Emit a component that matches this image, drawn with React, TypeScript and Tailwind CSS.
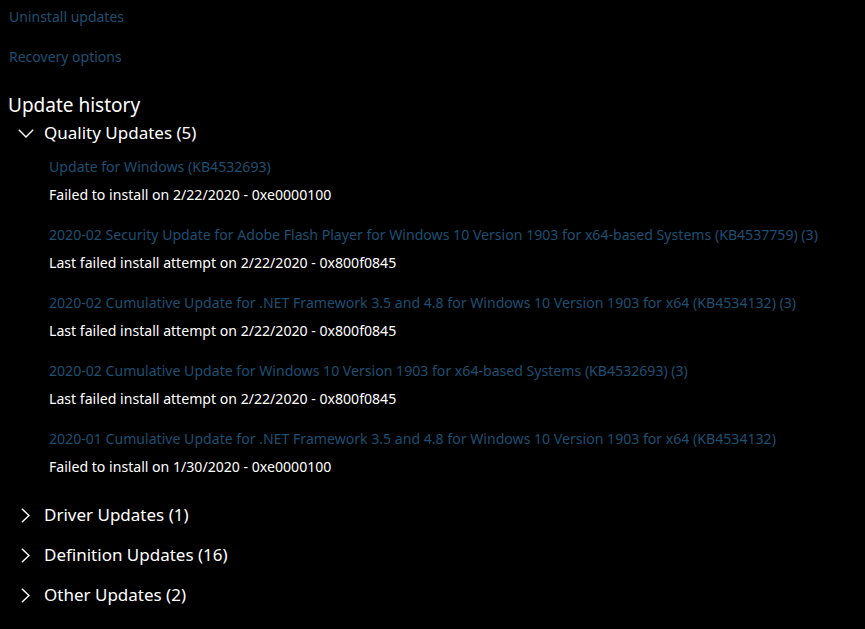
import React from "react";

const LINK = "text-[#1d4f73]";

const items = [
  ["Update for Windows (KB4532693)", "Failed to install on 2/22/2020 - 0xe0000100"],
  ["2020-02 Security Update for Adobe Flash Player for Windows 10 Version 1903 for x64-based Systems (KB4537759) (3)", "Last failed install attempt on 2/22/2020 - 0x800f0845"],
  ["2020-02 Cumulative Update for .NET Framework 3.5 and 4.8 for Windows 10 Version 1903 for x64 (KB4534132) (3)", "Last failed install attempt on 2/22/2020 - 0x800f0845"],
  ["2020-02 Cumulative Update for Windows 10 Version 1903 for x64-based Systems (KB4532693) (3)", "Last failed install attempt on 2/22/2020 - 0x800f0845"],
  ["2020-01 Cumulative Update for .NET Framework 3.5 and 4.8 for Windows 10 Version 1903 for x64 (KB4534132)", "Failed to install on 1/30/2020 - 0xe0000100"],
];

function ChevronDown() {
  return (
    <svg width="16" height="9" viewBox="0 0 16 9" className="shrink-0">
      <path d="M0.8 0.8 L8 8 L15.2 0.8" stroke="white" strokeWidth="1.4" fill="none" />
    </svg>
  );
}
function ChevronRight() {
  return (
    <svg width="9" height="15" viewBox="0 0 9 15" className="shrink-0">
      <path d="M0.8 0.8 L8 7.5 L0.8 14.2" stroke="white" strokeWidth="1.4" fill="none" />
    </svg>
  );
}

export default function App() {
  return (
    <div
      className="w-[865px] h-[629px] bg-black overflow-hidden text-white"
      style={{ fontFamily: '"Noto Sans", "Open Sans", sans-serif' }}
    >
      <div className="flex flex-col pt-[5px]">
        <div className={`h-[22px] flex items-center pl-[9px] text-[14px] ${LINK}`}>Uninstall updates</div>
        <div className="h-[18px]" />
        <div className={`h-[22px] flex items-center pl-[9px] text-[14px] ${LINK}`}>Recovery options</div>
        <div className="h-[24px]" />
        <div className="h-[28px] flex items-center pl-[8px] text-[19px]">Update history</div>
        <div className="h-[28px] flex items-center pl-[18px] gap-[10px] text-[17px]">
          <ChevronDown />
          <span>Quality Updates (5)</span>
        </div>
        <div className="flex flex-col pl-[49px] pt-[6px]">
          {items.map(([t, d], i) => (
            <div key={i} className="flex flex-col h-[68px]">
              <div className={`h-[28px] flex items-center text-[14.1px] ${LINK}`}>{t}</div>
              <div className="h-[28px] flex items-center text-[14.1px] text-white">{d}</div>
            </div>
          ))}
        </div>
        <div className="flex flex-col pt-[2px]">
          {["Driver Updates (1)", "Definition Updates (16)", "Other Updates (2)"].map((s) => (
            <div key={s} className="h-[40px] flex items-center pl-[21px] gap-[14px] text-[17px]">
              <ChevronRight />
              <span>{s}</span>
            </div>
          ))}
        </div>
      </div>
    </div>
  );
}
